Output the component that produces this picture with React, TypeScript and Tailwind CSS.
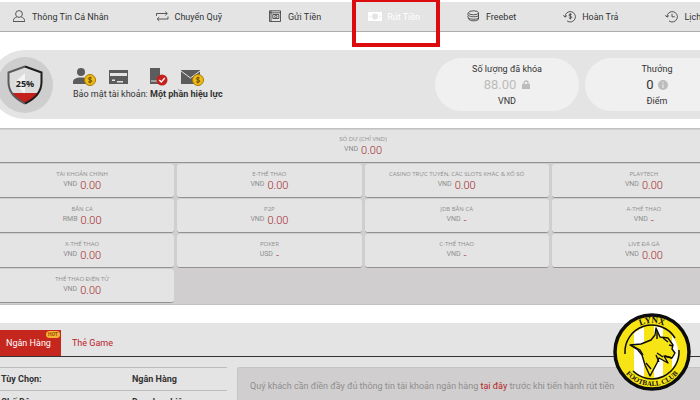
import type { ReactNode } from "react";

interface NavItem {
  label: string;
  icon: ReactNode;
  active?: boolean;
}

interface Wallet {
  name: string;
  currency: string;
  amount: string;
}

const NAV_ITEMS: NavItem[] = [
  {
    label: "Thông Tin Cá Nhân",
    icon: (
      <>
        <circle cx="6" cy="4" r="3.4" />
        <path d="M.5 11.5v-1c0-2 1.4-3 3-3.2M11.5 11.5v-1c0-2-1.4-3-3-3.2M.2 11.5h11.6" />
      </>
    ),
  },
  {
    label: "Chuyển Quỹ",
    icon: (
      <path d="M.5 6V3.500h10.500M9.300 1.600l2 1.900-2 1.900M12 6.500V9H1.500M3.200 7.100l-2 1.900 2 1.900" />
    ),
  },
  {
    label: "Gửi Tiền",
    icon: (
      <>
        <path d="M.5.8h11v10.700H.5zM.5 2.800h11M2 .8v10.700" />
        <path d="M3.800 4.500h6v4h-6z" />
        <circle cx="6.800" cy="6.500" r="1.200" />
      </>
    ),
  },
  {
    label: "Rút Tiền",
    active: true,
    icon: (
      <path
        d="M0 2h14v9H0zM7 3.500a3 3 0 1 0 0 6 3 3 0 0 0 0-6zM1.500 5.500h1v2h-1zM11.500 5.500h1v2h-1z"
        fill="currentColor"
        fillRule="evenodd"
        stroke="none"
      />
    ),
  },
  {
    label: "Freebet",
    icon: (
      <>
        <ellipse cx="6.500" cy="2.800" rx="5" ry="2" />
        <path d="M1.500 2.800c-1 .8-1 1.800 0 2.500-1 .8-1 1.800 0 2.500-1 3.800 10 3.800 10 1.200v-6M1.500 5.300c1 1.900 10 2 10 0M1.500 7.800c1 1.900 10 2 10 0" />
      </>
    ),
  },
  {
    label: "Hoàn Trả",
    icon: (
      <path d="M2 7a5.200 5.200 0 1 1 2 3.900M.3 5.300 2 7.200l2-1.700M8.600 4.600c-.6-.7-2.600-.7-2.600.5 0 1.400 2.700.7 2.700 2.200 0 1.200-2.200 1.200-2.900.3M7.300 3.400v6" />
    ),
  },
  {
    label: "Lịch Sử",
    icon: (
      <path d="M2 7a5.200 5.200 0 1 1 2 3.900M.3 5.300 2 7.200l2-1.700M7 3.800v3h2.800" />
    ),
  },
];

const WALLETS: Wallet[] = [
  { name: "TÀI KHOẢN CHÍNH", currency: "VND", amount: "0.00" },
  { name: "E-THỂ THAO", currency: "VND", amount: "0.00" },
  {
    name: "CASINO TRỰC TUYẾN, CÁC SLOTS KHÁC & XỔ SỐ",
    currency: "VND",
    amount: "0.00",
  },
  { name: "PLAYTECH", currency: "VND", amount: "0.00" },
  { name: "BẮN CÁ", currency: "RMB", amount: "0.00" },
  { name: "P2P", currency: "VND", amount: "0.00" },
  { name: "JDB BẮN CÁ", currency: "VND", amount: "-" },
  { name: "A-THỂ THAO", currency: "VND", amount: "-" },
  { name: "X-THỂ THAO", currency: "VND", amount: "0.00" },
  { name: "POKER", currency: "USD", amount: "-" },
  { name: "C-THỂ THAO", currency: "VND", amount: "-" },
  { name: "LIVE ĐÁ GÀ", currency: "VND", amount: "0.00" },
  { name: "THỂ THAO ĐIỆN TỬ", currency: "VND", amount: "0.00" },
];

function Nav() {
  return (
    <nav className="flex h-[30px] items-center gap-[47px] border-b border-[#adadad] bg-[#e4e4e4] pl-[13px]">
      {NAV_ITEMS.map((item) => (
        <a
          key={item.label}
          href="#"
          className={
            item.active
              ? "relative flex shrink-0 items-center gap-[5px] whitespace-nowrap text-white"
              : "flex shrink-0 items-center gap-[5px] whitespace-nowrap"
          }
        >
          <svg
            viewBox="0 0 14 13"
            className="h-[13px] w-3.5"
            fill="none"
            stroke="currentColor"
            strokeWidth="0.8"
          >
            {item.icon}
          </svg>
          {item.label}
          {item.active && (
            <span className="absolute -top-3 -right-5 -left-4 h-[49px] border-4 border-[#dc0b0e]" />
          )}
        </a>
      ))}
    </nav>
  );
}

function Shield() {
  return (
    <div className="flex size-14 shrink-0 items-center justify-center rounded-full bg-[#cecece]">
      <svg viewBox="0 0 36 40" className="h-10 w-9">
        <path
          d="M18 1.500 1.500 7.500V17c0 10 7 17 16.500 21.500C27.500 34 34.500 27 34.500 17V7.500z"
          fill="#dcdcdc"
        />
        <path d="M18 8 8 17l10 13z" fill="#f4f4f4" />
        <path d="M4 28h28c-3 5-8 8-14 10.500C12 36 7 33 4 28z" fill="#c5211c" />
        <path
          d="M18 1.500 1.500 7.500V17c0 10 7 17 16.500 21.500"
          fill="none"
          stroke="#5a5a5a"
          strokeWidth="2"
        />
        <path
          d="M18 1.500 34.500 7.500V17c0 10-7 17-16.500 21.500"
          fill="none"
          stroke="#1d1d1d"
          strokeWidth="2"
        />
        <text
          x="18"
          y="22"
          textAnchor="middle"
          className="font-['Open_Sans',sans-serif] text-[9px] font-bold"
          fill="#222"
        >
          25%
        </text>
      </svg>
    </div>
  );
}

function Coin() {
  return (
    <>
      <circle cx="17" cy="13" r="5.500" fill="#f0bd18" stroke="#a87808" />
      <path
        d="M18.800 11.200c-.8-1-3.500-.8-3.500.5 0 1.600 3.600.8 3.600 2.500 0 1.400-2.900 1.500-3.800.4M17 9.600v6.800"
        fill="none"
        stroke="#6b4700"
      />
    </>
  );
}

function SecurityIcons() {
  return (
    <div className="flex items-center gap-[13px] text-[#5c5c5c]">
      <svg viewBox="0 0 23 19" className="h-[19px] w-[23px]" fill="currentColor">
        <circle cx="8" cy="5" r="4" />
        <path d="M0 17v-2c0-3 3-4.500 8-4.500s8 1.500 8 4.500v2z" />
        <Coin />
      </svg>
      <svg viewBox="0 0 23 19" className="h-[19px] w-[23px]" fill="currentColor">
        <path
          d="M0 3h19v14H0zM1 6v3h17V6zM3 12.500V14h3v-1.500zm5 1.500v1.500h6V14z"
          fillRule="evenodd"
        />
      </svg>
      <svg viewBox="0 0 23 19" className="h-[19px] w-[23px]" fill="currentColor">
        <path d="M5 1h10v16H5z" />
        <path d="M6 14h7" stroke="#e4e4e4" />
        <circle cx="17" cy="13" r="5.500" fill="#c5211c" />
        <path
          d="m14.300 13 2 2 3.500-4"
          fill="none"
          stroke="#fff"
          strokeWidth="1.300"
        />
      </svg>
      <svg viewBox="0 0 23 19" className="h-[19px] w-[23px]" fill="currentColor">
        <path d="M0 3h19v14H0z" />
        <path d="m0 4 9.500 7L19 4" fill="none" stroke="#e4e4e4" />
        <Coin />
      </svg>
    </div>
  );
}

function Summary() {
  return (
    <section className="mt-[18px] -mr-9 -ml-2.5 flex h-[69px] items-center rounded-l-full bg-[#e4e4e4] pr-[7px] pl-[7px]">
      <Shield />
      <div className="ml-5 flex-1">
        <SecurityIcons />
        <p className="leading-4">
          Bảo mật tài khoản: <strong>Một phần hiệu lực</strong>
        </p>
      </div>
      <div className="flex gap-1.5 text-center">
        <div className="flex h-[53px] w-36 flex-col justify-center rounded-full bg-[#f0f0f0]">
          <p className="leading-4">Số lượng đã khóa</p>
          <p className="flex items-center justify-center gap-1.5 text-[13px] leading-4 text-[#bcbcbc]">
            88.00
            <svg viewBox="0 0 8 10" className="h-2.5 w-2" fill="currentColor">
              <path d="M0 4h8v5H0z" />
              <path
                d="M2 4.500V3a2 2 0 0 1 4 0v1.500"
                fill="none"
                stroke="currentColor"
                strokeWidth="1.300"
              />
            </svg>
          </p>
          <p className="leading-4">VND</p>
        </div>
        <div className="flex h-[53px] w-36 flex-col justify-center rounded-full bg-[#f0f0f0]">
          <p className="leading-4">Thưởng</p>
          <p className="flex items-center justify-center gap-1 text-[13px] leading-4">
            0
            <svg viewBox="0 0 10 10" className="size-2.5">
              <circle cx="5" cy="5" r="5" fill="#bdbdbd" />
              <path d="M5 2v1.300M5 4.300V8" stroke="#f0f0f0" />
            </svg>
          </p>
          <p className="leading-4">Điểm</p>
        </div>
      </div>
    </section>
  );
}

function WalletText({ name, currency, amount }: Wallet) {
  return (
    <>
      <p className="font-['Open_Sans','Noto_Sans',sans-serif] text-[6px] leading-[10px] text-[#8e8e8e]">
        {name}
      </p>
      <p className="flex items-start justify-center gap-[3px] text-[7px] leading-[10px] text-[#8e8e8e]">
        {currency}
        <span className="text-[11px] leading-[14px] font-light text-[#a3262a]">
          {amount}
        </span>
      </p>
    </>
  );
}

function Wallets() {
  return (
    <section className="mt-[9px] -mr-9 -ml-2.5 border-y border-[#c2c2c2] bg-[#d0cece] text-center whitespace-nowrap">
      <div className="mt-px h-[33px] border-b border-[#929292] bg-[#e4e4e4] pt-1">
        <WalletText name="SỐ DƯ (CHỈ VND)" currency="VND" amount="0.00" />
      </div>
      <div className="my-px grid grid-cols-4 gap-x-[3px] gap-y-px">
        {WALLETS.map((wallet) => (
          <div
            key={wallet.name}
            className="h-[34px] rounded-[3px] border-b border-[#929292] bg-[#e4e4e4] pt-[5px]"
          >
            <WalletText {...wallet} />
          </div>
        ))}
      </div>
    </section>
  );
}

function Withdrawal() {
  return (
    <section className="mt-[18px] bg-[#e4e4e4] pt-[7px]">
      <div className="flex border-b border-[#333]">
        <button className="relative h-[26px] bg-[#c5261e] pr-2.5 pl-1.5 text-white">
          Ngân Hàng
          <span className="absolute top-px right-px rounded-full bg-[#f5b331] px-0.5 text-[5px] leading-[7px] font-bold text-[#9c4a0c]">
            HOT
          </span>
        </button>
        <button className="h-[26px] px-[11px] text-[#bb2228]">Thẻ Game</button>
      </div>
      <div className="flex gap-2.5 pt-2.5">
        <table className="w-[227px] shrink-0 text-left">
          <tbody>
            <tr className="h-[23px] border-t border-[#bdbdbd]">
              <th className="w-[132px] pl-px">Tùy Chọn:</th>
              <td className="font-bold">Ngân Hàng</td>
            </tr>
            <tr className="h-[23px] border-t border-[#bdbdbd]">
              <th className="pl-px">Chế Độ:</th>
              <td className="font-bold">Doanh nghiệp</td>
            </tr>
          </tbody>
        </table>
        <div className="min-w-0 flex-1 rounded-tl-[3px] border-t border-l border-[#c4c4c4] bg-[#d0cece] pt-3 pl-3 whitespace-nowrap text-[#8f8f8f]">
          Quý khách cần điền đầy đủ thông tin tài khoản ngân hàng{" "}
          <a href="#" className="text-[#b3262b]">
            tại đây
          </a>{" "}
          trước khi tiến hành rút tiền
        </div>
      </div>
    </section>
  );
}

function LynxBadge() {
  return (
    <svg
      viewBox="0 0 78 78"
      className="absolute right-[9px] bottom-[9px] size-[78px]"
    >
      <defs>
        <path id="arc-top" d="M10 39a29 29 0 0 1 58 0" />
        <path id="arc-bottom" d="M5 39a34 34 0 0 0 68 0" />
        <clipPath id="inner">
          <circle cx="39" cy="39" r="26" />
        </clipPath>
      </defs>
      <circle
        cx="39"
        cy="39"
        r="37"
        fill="#f7e414"
        stroke="#0c0c0c"
        strokeWidth="3.500"
      />
      <g clipPath="url(#inner)">
        <path d="M21 10h10v60H21zM41 10h9v60h-9zM59 10h9v60h-9z" fill="#fff" />
      </g>
      <path
        d="M12 41A27 27 0 0 1 62 25M66 37A27 27 0 0 1 20 58"
        fill="none"
        stroke="#0c0c0c"
        strokeWidth="1.500"
      />
      <path
        d="M17 32l11-1 10-4 4-5 1-7 4 9 8 1 5 7-1 4 3 4-3 5-8-2 4 7-9-5-2 5-7 13-5-11-3-10-4-5z"
        fill="#f7e414"
        stroke="#0c0c0c"
        strokeWidth="1.400"
        strokeLinejoin="round"
      />
      <path
        d="M18 32l9 5 3 5M44 18v8M50 25l5 4M56 32l4 1M44 40l6 4M43 42l3 7M52 43l7 2M33 50l5 6"
        fill="none"
        stroke="#0c0c0c"
        strokeWidth="1.400"
      />
      <g
        className="font-['Liberation_Serif',serif] font-bold"
        fill="#0c0c0c"
        textAnchor="middle"
      >
        <text className="text-[9px]">
          <textPath href="#arc-top" startOffset="50%">
            LYNX
          </textPath>
        </text>
        <text className="text-[7px]">
          <textPath href="#arc-bottom" startOffset="50%">
            FOOTBALL CLUB
          </textPath>
        </text>
      </g>
    </svg>
  );
}

export default function App() {
  return (
    <main className="relative h-screen overflow-hidden bg-white pt-0.5 font-[Roboto,'Noto_Sans',sans-serif] text-[9px] leading-3 text-[#333]">
      <Nav />
      <Summary />
      <Wallets />
      <Withdrawal />
      <LynxBadge />
    </main>
  );
}
